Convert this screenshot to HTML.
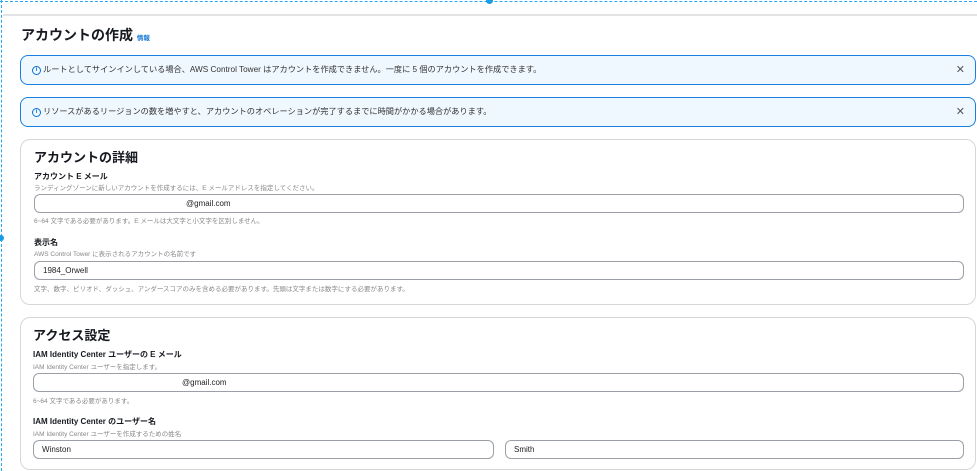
<!DOCTYPE html>
<html><head><meta charset="utf-8"><style>
*{box-sizing:border-box;margin:0;padding:0}
body{width:977px;height:471px;overflow:hidden;background:#fff;font-family:"Liberation Sans","Noto Sans CJK JP",sans-serif;color:#16191f;position:relative}
.abs{position:absolute}
.dash-l{left:1px;top:0;width:0;height:471px;border-left:1.5px dashed #29a8f0}
.dash-t{left:0;top:1px;width:977px;height:0;border-top:1.5px dashed #29a8f0}
.gl{left:3px;top:14px;width:974px;height:2px;background:#e2e3e5}
.alert{left:20px;width:956px;height:30px;border:1px solid #1a7fe0;border-radius:8px;background:#f0f8ff;font-size:8.2px;color:#333;padding-left:22px;line-height:28px}
.alert .i{position:absolute;left:11px;top:10px;width:9px;height:9px;border:1.2px solid #0972d3;border-radius:50%;font-size:6px;line-height:7px;text-align:center;color:#0972d3;font-weight:bold}
.alert .x{position:absolute;right:10px;top:0;font-size:11px;color:#555}
.card{left:20px;width:956px;border:1px solid #d5d7da;border-radius:10px}
.h{font-size:13px;font-weight:bold}
.lb{font-size:8px;font-weight:bold}
.ds{font-size:6.5px;color:#888}
.in{height:19px;border:1px solid #9ba0a6;border-radius:6px;font-size:8px;line-height:17px;padding-left:8px;color:#222}
</style></head><body>
<div class="abs dash-l"></div><div class="abs dash-t"></div>
<div class="abs" style="left:486px;top:-3px;width:7px;height:7px;border-radius:50%;background:#1a9be6"></div>
<div class="abs" style="left:-2px;top:235px;width:6px;height:6px;border-radius:50%;background:#1a9be6"></div>
<div class="abs gl"></div>
<div class="abs" style="left:21px;top:25px;font-size:14px;font-weight:bold">アカウントの作成 <span style="font-size:6.5px;color:#0972d3">情報</span></div>
<div class="abs alert" style="top:55px"><span class="i">i</span>ルートとしてサインインしている場合、AWS Control Tower はアカウントを作成できません。一度に 5 個のアカウントを作成できます。<span class="x">✕</span></div>
<div class="abs alert" style="top:97px"><span class="i">i</span>リソースがあるリージョンの数を増やすと、アカウントのオペレーションが完了するまでに時間がかかる場合があります。<span class="x">✕</span></div>
<div class="abs card" style="top:139px;height:166px"></div>
<div class="abs h" style="left:34px;top:147px">アカウントの詳細</div>
<div class="abs lb" style="left:34px;top:171px">アカウント E メール</div>
<div class="abs ds" style="left:34px;top:182px">ランディングゾーンに新しいアカウントを作成するには、E メールアドレスを指定してください。</div>
<div class="abs in" style="left:34px;top:194px;width:930px"><span style="margin-left:143px">@gmail.com</span></div>
<div class="abs ds" style="left:34px;top:215px">6~64 文字である必要があります。E メールは大文字と小文字を区別しません。</div>
<div class="abs lb" style="left:34px;top:237px">表示名</div>
<div class="abs ds" style="left:34px;top:248px">AWS Control Tower に表示されるアカウントの名前です</div>
<div class="abs in" style="left:34px;top:261px;width:930px">1984_Orwell</div>
<div class="abs ds" style="left:34px;top:283px">文字、数字、ピリオド、ダッシュ、アンダースコアのみを含める必要があります。先頭は文字または数字にする必要があります。</div>
<div class="abs card" style="top:317px;height:153px"></div>
<div class="abs h" style="left:33px;top:325px">アクセス設定</div>
<div class="abs lb" style="left:33px;top:349px">IAM Identity Center ユーザーの E メール</div>
<div class="abs ds" style="left:33px;top:361px">IAM Identity Center ユーザーを指定します。</div>
<div class="abs in" style="left:33px;top:373px;width:931px"><span style="margin-left:140px">@gmail.com</span></div>
<div class="abs ds" style="left:33px;top:395px">6~64 文字である必要があります。</div>
<div class="abs lb" style="left:33px;top:416px">IAM Identity Center のユーザー名</div>
<div class="abs ds" style="left:33px;top:428px">IAM Identity Center ユーザーを作成するための姓名</div>
<div class="abs in" style="left:33px;top:440px;width:461px">Winston</div>
<div class="abs in" style="left:505px;top:440px;width:459px">Smith</div>
</body></html>
